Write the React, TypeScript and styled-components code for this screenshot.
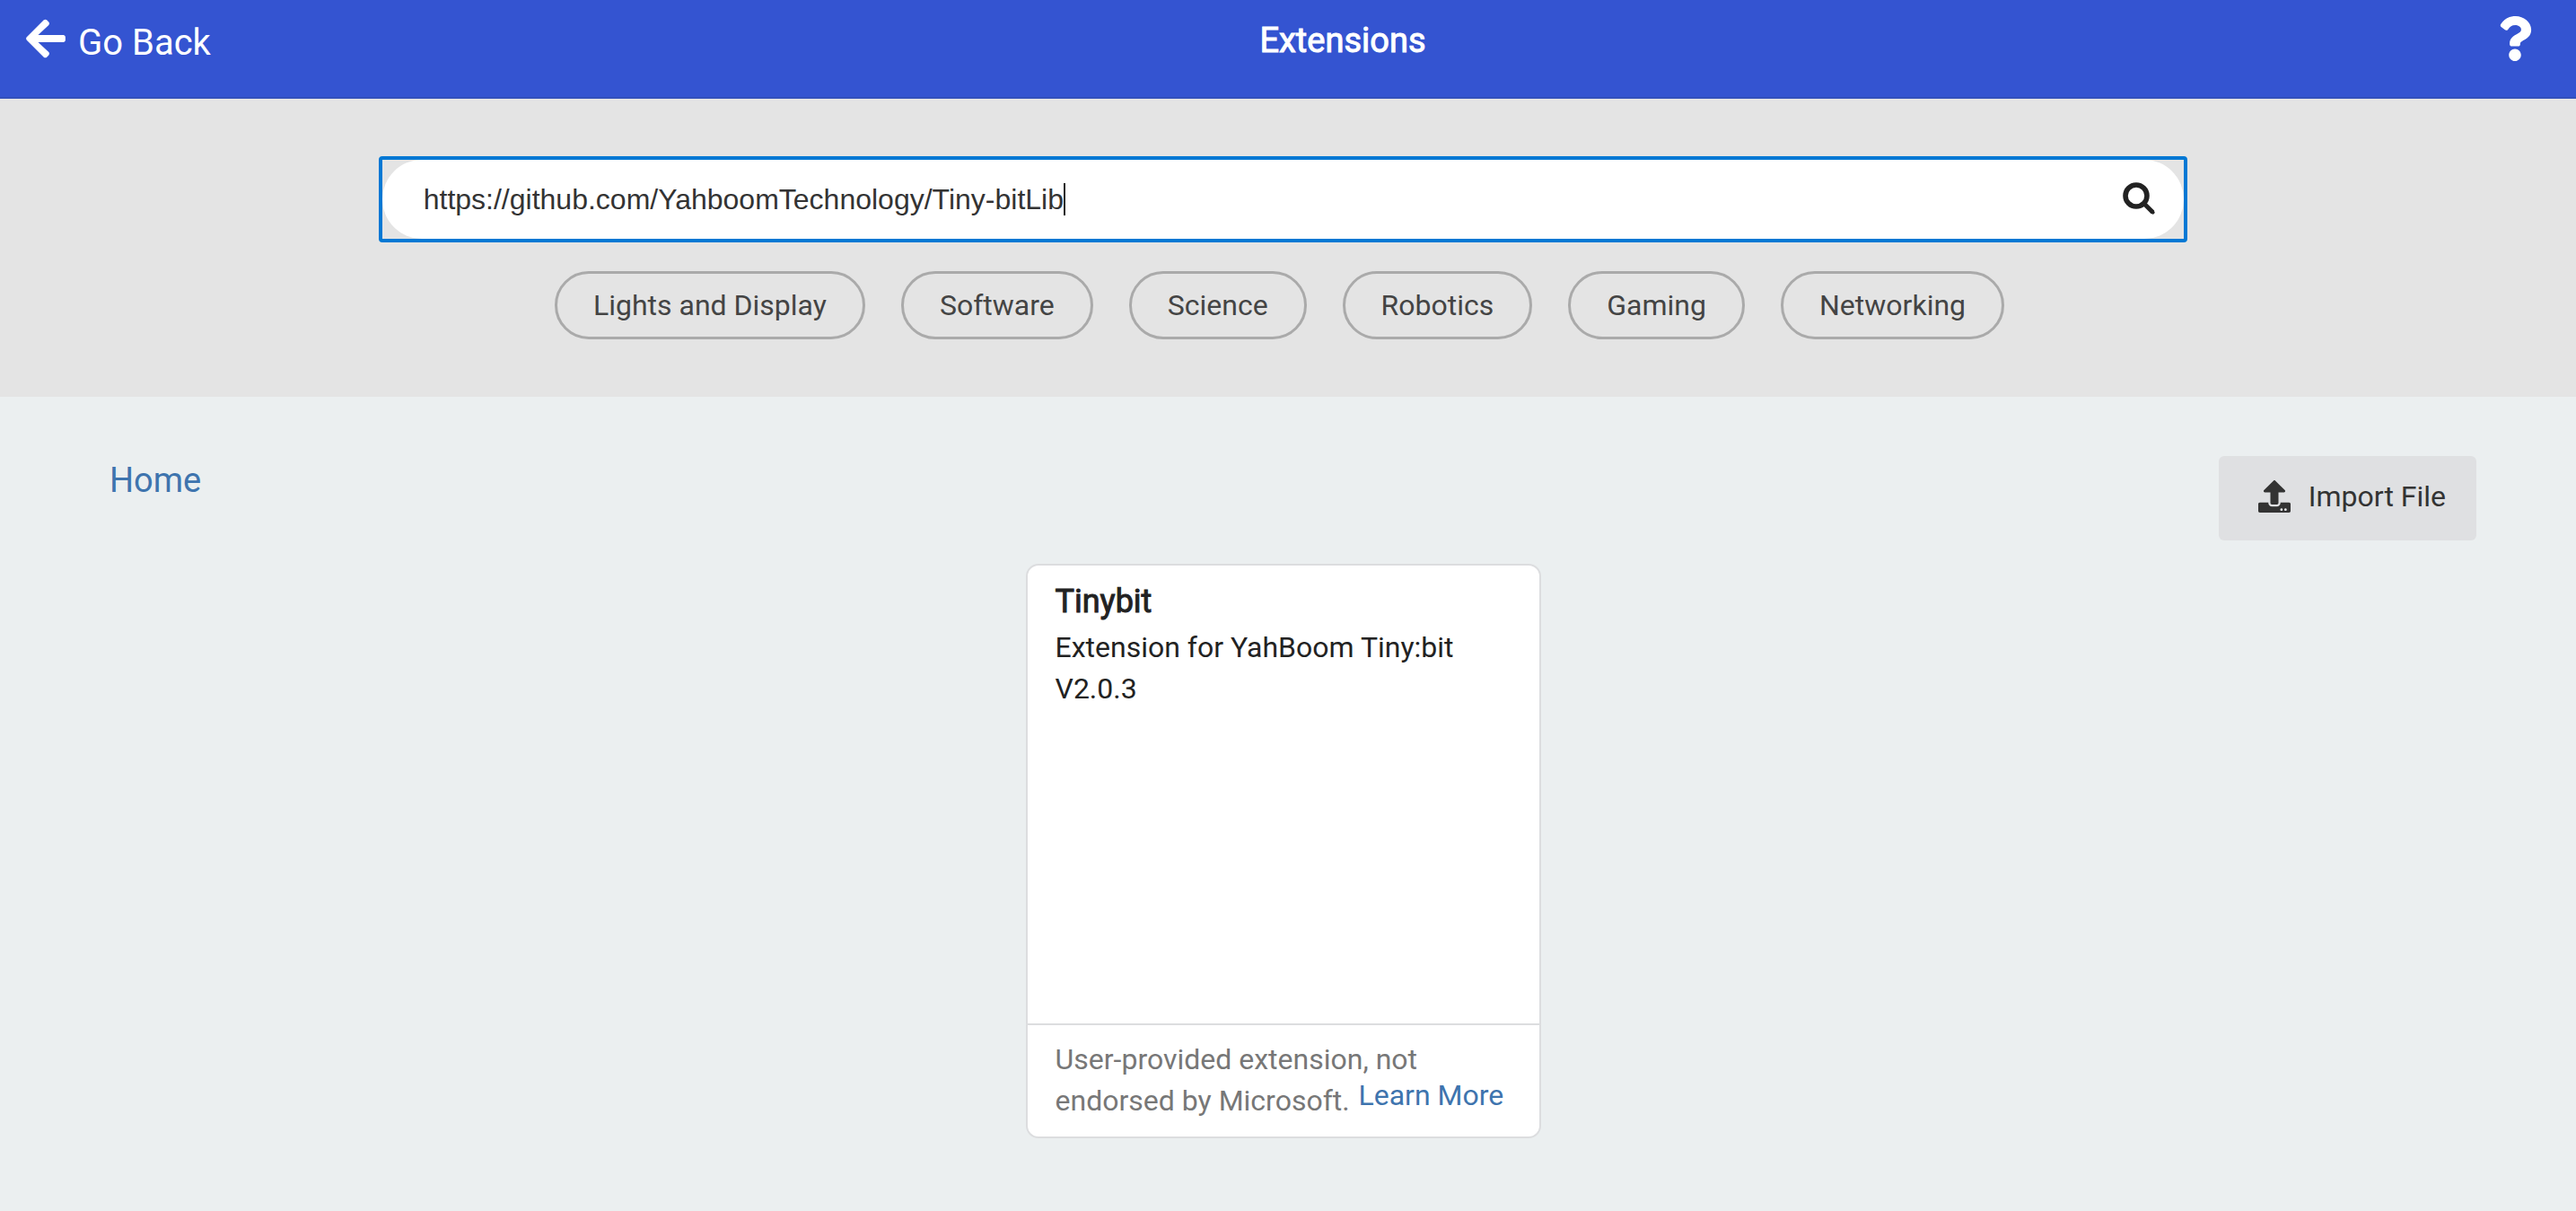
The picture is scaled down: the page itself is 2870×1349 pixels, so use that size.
import React, { useState } from "react";
import styled, { createGlobalStyle } from "styled-components";
import { FaArrowLeft, FaQuestion, FaUpload } from "react-icons/fa";

const GlobalStyle = createGlobalStyle`
  * { box-sizing: border-box; }
  body {
    margin: 0;
    background: #ebeff0;
    color: #222;
    font-family: Roboto, "Open Sans", sans-serif;
    font-size: 32px;
    line-height: 46px;
  }
  button, input { font: inherit; color: inherit; }
  h1, h2, p { margin: 0; }
`;

const Header = styled.header`
  display: grid;
  grid-template-columns: 1fr auto 1fr;
  align-items: start;
  height: 110px;
  padding: 18px 48px 0 28px;
  background: #3454d1;
  border-bottom: 2px solid #3350bb;
  color: #fff;
`;

const HeaderButton = styled.button`
  display: flex;
  align-items: center;
  gap: 13px;
  padding: 0;
  border: 0;
  background: none;
  cursor: pointer;
  font-size: 40px;
  line-height: 60px;
`;

const BackIcon = styled(FaArrowLeft)`
  width: 46px;
  height: 50px;
  margin-bottom: 10px;
`;

const HelpButton = styled(HeaderButton)`
  justify-self: end;
`;

const HelpIcon = styled(FaQuestion)`
  width: 40px;
  height: 50px;
`;

const Title = styled.h1`
  padding-left: 142px;
  font-size: 38px;
  line-height: 54px;
  font-weight: 400;
  -webkit-text-stroke: 1px currentColor;
`;

const SearchArea = styled.section`
  display: flex;
  flex-direction: column;
  align-items: center;
  gap: 32px;
  padding: 64px 11px 64px 0;
  background: #e4e4e4;
`;

const SearchBox = styled.form`
  position: relative;
  display: flex;
  align-items: center;
  width: 70.5%;
  border: 4px solid #0078d4;
  border-radius: 4px;
`;

const SearchInput = styled.input`
  flex: 1;
  min-width: 0;
  height: 88px;
  padding: 0 112px 0 46px;
  border: 0;
  border-radius: 44px;
  outline: 0;
  background: #fff;
  color: #333;
  font-family: "Liberation Sans", Arial, sans-serif;
`;

const Caret = styled.span`
  position: absolute;
  left: 759px;
  top: 26px;
  width: 2px;
  height: 36px;
  background: #222;
`;

const SearchButton = styled.button`
  position: absolute;
  right: 32px;
  top: 25px;
  display: flex;
  padding: 0;
  border: 0;
  background: none;
  color: #222;
  cursor: pointer;
`;

const Tags = styled.nav`
  display: flex;
  flex-wrap: wrap;
  justify-content: center;
  gap: 40px;
  padding-right: 8px;
`;

const Tag = styled.button`
  height: 76px;
  padding: 0 40px;
  border: 3px solid #aaa;
  border-radius: 38px;
  background: none;
  color: #444;
  cursor: pointer;
`;

const Main = styled.main`
  padding: 66px 111px 80px 122px;
`;

const Toolbar = styled.div`
  display: flex;
  justify-content: space-between;
  align-items: flex-start;
`;

const HomeLink = styled.a`
  color: #3e74ae;
  font-size: 38px;
  line-height: 54px;
  text-decoration: none;
`;

const ImportButton = styled.button`
  display: flex;
  align-items: center;
  gap: 20px;
  height: 94px;
  padding: 0 34px 4px 44px;
  border: 0;
  border-radius: 6px;
  background: #dfe0e2;
  color: #333;
  cursor: pointer;
`;

const Results = styled.div`
  display: flex;
  justify-content: center;
  padding-right: 22px;
  margin-top: 26px;
`;

const Card = styled.article`
  display: flex;
  flex-direction: column;
  width: 574px;
  min-height: 640px;
  border: 2px solid #dcdddf;
  border-radius: 14px;
  background: #fff;
`;

const CardBody = styled.div`
  flex: 1;
  padding: 12px 31px;
`;

const CardTitle = styled.h2`
  font-size: 36px;
  line-height: 56px;
  font-weight: 400;
  -webkit-text-stroke: 1px currentColor;
`;

const CardFooter = styled.footer`
  display: flex;
  align-items: flex-end;
  padding: 15px 31px 17px;
  border-top: 2px solid #dcdddf;
  color: #777;
`;

const Notice = styled.p`
  width: 338px;
  white-space: nowrap;
`;

const LearnMore = styled.a`
  padding-bottom: 6px;
  color: #3e74ae;
  text-decoration: none;
  white-space: nowrap;
`;

const SearchIcon = () => (
  <svg width="36" height="36" viewBox="0 0 36 36" fill="none" stroke="currentColor" aria-hidden>
    <circle cx="15" cy="15" r="12" strokeWidth="5.6" />
    <path d="M23.5 23.5L33.5 33.5" strokeWidth="5" />
    <path d="M32.5 32.5L33.6 33.6" strokeWidth="4" strokeLinecap="round" />
  </svg>
);

const categories = [
  "Lights and Display",
  "Software",
  "Science",
  "Robotics",
  "Gaming",
  "Networking",
];

export default function App() {
  const [query, setQuery] = useState(
    "https://github.com/YahboomTechnology/Tiny-bitLib"
  );

  return (
    <>
      <GlobalStyle />
      <Header>
        <HeaderButton type="button">
          <BackIcon aria-hidden />
          Go Back
        </HeaderButton>
        <Title>Extensions</Title>
        <HelpButton type="button" aria-label="Help">
          <HelpIcon aria-hidden />
        </HelpButton>
      </Header>
      <SearchArea>
        <SearchBox role="search" onSubmit={(e) => e.preventDefault()}>
          <SearchInput
            type="text"
            aria-label="Search or enter project URL"
            value={query}
            onChange={(e) => setQuery(e.target.value)}
          />
          <Caret aria-hidden />
          <SearchButton type="submit" aria-label="Search">
            <SearchIcon />
          </SearchButton>
        </SearchBox>
        <Tags aria-label="Categories">
          {categories.map((name) => (
            <Tag key={name} type="button">
              {name}
            </Tag>
          ))}
        </Tags>
      </SearchArea>
      <Main>
        <Toolbar>
          <HomeLink href="#home">Home</HomeLink>
          <ImportButton type="button">
            <FaUpload size={36} aria-hidden />
            Import File
          </ImportButton>
        </Toolbar>
        <Results>
          <Card>
            <CardBody>
              <CardTitle>Tinybit</CardTitle>
              <p>
                Extension for YahBoom Tiny:bit
                <br />
                V2.0.3
              </p>
            </CardBody>
            <CardFooter>
              <Notice>
                User-provided extension, not
                <br />
                endorsed by Microsoft.
              </Notice>
              <LearnMore href="#learn-more">Learn More</LearnMore>
            </CardFooter>
          </Card>
        </Results>
      </Main>
    </>
  );
}
